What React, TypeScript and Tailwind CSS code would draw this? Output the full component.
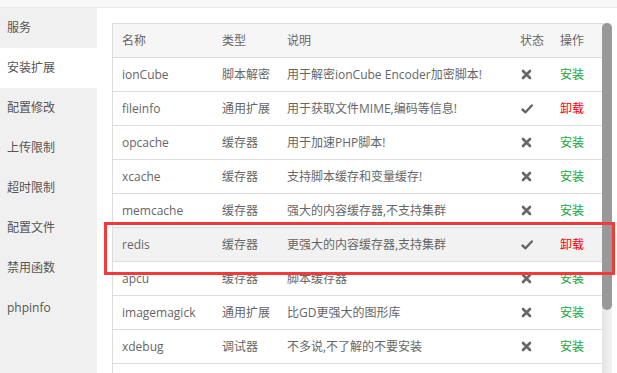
import React from "react";

const menu = ["服务", "安装扩展", "配置修改", "上传限制", "超时限制", "配置文件", "禁用函数", "phpinfo"];

type Row = { name: string; type: string; desc: string; installed: boolean; hl?: boolean };
const rows: Row[] = [
  { name: "ionCube", type: "脚本解密", desc: "用于解密ionCube Encoder加密脚本!", installed: false },
  { name: "fileinfo", type: "通用扩展", desc: "用于获取文件MIME,编码等信息!", installed: true },
  { name: "opcache", type: "缓存器", desc: "用于加速PHP脚本!", installed: false },
  { name: "xcache", type: "缓存器", desc: "支持脚本缓存和变量缓存!", installed: false },
  { name: "memcache", type: "缓存器", desc: "强大的内容缓存器,不支持集群", installed: false },
  { name: "redis", type: "缓存器", desc: "更强大的内容缓存器,支持集群", installed: true, hl: true },
  { name: "apcu", type: "缓存器", desc: "脚本缓存器", installed: false },
  { name: "imagemagick", type: "通用扩展", desc: "比GD更强大的图形库", installed: false },
  { name: "xdebug", type: "调试器", desc: "不多说,不了解的不要安装", installed: false },
  { name: "", type: "", desc: "", installed: false },
];

const Cross = () => (
  <svg width="11" height="11" viewBox="0 0 11 11">
    <path d="M2 2 L9 9 M9 2 L2 9" stroke="#666" strokeWidth="2.6" strokeLinecap="round" />
  </svg>
);
const Check = () => (
  <svg width="12" height="10" viewBox="0 0 12 10">
    <path d="M1.5 5.5 L4.5 8.3 L10.8 1.5" stroke="#666" strokeWidth="2.4" fill="none" strokeLinecap="round" strokeLinejoin="round" />
  </svg>
);

function Cells({ r }: { r: Row }) {
  return (
    <>
      <div className="w-[100px] pl-[9px] whitespace-nowrap">{r.name}</div>
      <div className="w-[65px] pl-[9px] whitespace-nowrap">{r.type}</div>
      <div className="w-[233px] pl-[9px] whitespace-nowrap">{r.desc}</div>
      <div className="w-[40px] pl-[10px] flex items-center">
        {r.name ? (r.installed ? <Check /> : <Cross />) : null}
      </div>
      <div className="w-[51px] pl-[9px] whitespace-nowrap">
        {r.name ? (
          r.installed ? (
            <span className="text-[#ff0000]">卸载</span>
          ) : (
            <span className="text-[#20a53a]">安装</span>
          )
        ) : null}
      </div>
    </>
  );
}

export default function App() {
  return (
    <div
      className="w-[617px] h-[373px] overflow-hidden bg-white flex flex-col relative text-[12px] text-[#666]"
      style={{ fontFamily: '"Open Sans", "Noto Sans CJK SC", sans-serif' }}
    >
      <div className="h-[8px] shrink-0 bg-[#f7f7f7] border-b border-[#ececec]" />
      <div className="flex flex-1 min-h-0">
        <div className="w-[97px] shrink-0 bg-[#f0f0f0] flex flex-col">
          {menu.map((m, i) => (
            <div
              key={m}
              className={
                "h-[40px] shrink-0 flex items-center pl-[7px] text-[#555] " + (i === 1 ? "bg-white" : "")
              }
            >
              {m}
            </div>
          ))}
        </div>
        <div className="flex-1 pl-[15px] pt-[15px] flex min-h-0">
          <div className="w-[490px] border-l border-t border-[#dddddd] flex flex-col">
            <div className="h-[34px] shrink-0 flex items-center bg-[#f6f6f6] border-b border-[#dddddd]">
              <div className="w-[100px] pl-[9px]">名称</div>
              <div className="w-[65px] pl-[9px]">类型</div>
              <div className="w-[233px] pl-[9px]">说明</div>
              <div className="w-[40px] pl-[9px]">状态</div>
              <div className="w-[51px] pl-[9px]">操作</div>
            </div>
            {rows.map((r, i) => (
              <div
                key={i}
                className={
                  "h-[34px] shrink-0 flex items-center border-b border-[#dddddd] " + (r.hl ? "bg-[#f2f2f2]" : "")
                }
              >
                <Cells r={r} />
              </div>
            ))}
          </div>
          <div className="w-[10px] bg-gradient-to-r from-[#e4e4e4] to-[#f2f2f2] flex flex-col">
            <div className="h-[287px] bg-[#999999] rounded-[5px]" />
          </div>
        </div>
      </div>
      <div className="absolute left-[104px] top-[222px] w-[511px] h-[53px] border-[3px] border-[#f23a3a] pointer-events-none" />
    </div>
  );
}
